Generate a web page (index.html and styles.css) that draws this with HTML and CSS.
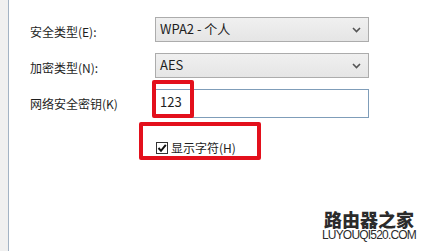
FILE: index.html
```
<!doctype html>
<html lang="zh-CN">
<head>
  <meta charset="utf-8">
  <title>无线网络属性</title>
  <meta name="viewport" content="width=device-width, initial-scale=1">
  <link rel="stylesheet" href="styles.css">
</head>
<body>
  <div class="window">
    <div class="strip"></div>
    <div class="panel">
      <div class="form">
        <div class="label">安全类型(E):</div>
        <div class="select">
          <span>WPA2 - 个人</span>
          <svg class="chev" width="9" height="6" viewBox="0 0 9 6">
            <path d="M1 1 L4.5 4.5 L8 1" fill="none" stroke="#555" stroke-width="1.6"/>
          </svg>
        </div>

        <div class="label">加密类型(N):</div>
        <div class="select">
          <span>AES</span>
          <svg class="chev" width="9" height="6" viewBox="0 0 9 6">
            <path d="M1 1 L4.5 4.5 L8 1" fill="none" stroke="#555" stroke-width="1.6"/>
          </svg>
        </div>

        <div class="label label-key">网络安全密钥(K)</div>
        <div class="input">123</div>

        <div></div>
        <label class="check">
          <span class="box">
            <svg width="10" height="10" viewBox="0 0 10 10">
              <path d="M1.5 5 L4 7.8 L8.8 1.8" fill="none" stroke="#111" stroke-width="2"/>
            </svg>
          </span>
          <span>显示字符(H)</span>
        </label>
      </div>

      <!-- annotation marks over the dialog -->
      <div class="mark mark-key"></div>
      <div class="mark mark-check"></div>

      <div class="logo">
        <div class="logo-cn">路由器之家</div>
        <div class="logo-en">LUYOUQI520.COM</div>
      </div>
    </div>
  </div>
</body>
</html>
```

FILE: styles.css
```
html,
body {
  margin: 0;
  padding: 0;
  background: #fff;
  font-family: "Noto Sans CJK SC", "Liberation Sans", sans-serif;
  font-size: 12px;
  color: #1e1e1e;
}

.window {
  display: flex;
  width: 424px;
  height: 251px;
  overflow: hidden;
}

.strip {
  width: 8px;
  background: #f0f0f0;
  border-right: 1px solid #a3b3c4;
}

.panel {
  position: relative;
  flex: 1;
}

.form {
  display: grid;
  grid-template-columns: 125px 214px;
  grid-template-rows: 25px 25px 29px 34px;
  row-gap: 11px;
  align-items: center;
  padding: 17px 0 0 21px;
}

.label {
  line-height: 16px;
  padding-top: 5px;
}

.label-key {
  padding-top: 0;
}

.select {
  height: 25px;
  box-sizing: border-box;
  border: 1px solid #acacac;
  background: linear-gradient(to bottom, #f0f0f0, #e5e5e5);
  display: flex;
  align-items: center;
  justify-content: space-between;
  padding: 0 7px 0 4px;
  font-size: 13px;
  line-height: 16px;
}

.select span {
  margin-top: -1px;
}

.input {
  height: 29px;
  box-sizing: border-box;
  border: 1px solid #7f9db9;
  background: #fff;
  display: flex;
  align-items: center;
  padding: 0 0 3px 4px;
  font-size: 13px;
  line-height: 16px;
}

.check {
  display: flex;
  align-items: center;
  gap: 3px;
  padding-left: 1px;
  padding-top: 3px;
  font-size: 12px;
  line-height: 16px;
}

.box {
  width: 12px;
  height: 12px;
  box-sizing: border-box;
  border: 1px solid #333;
  background: #fff;
  display: flex;
  align-items: center;
  justify-content: center;
}

.mark {
  position: absolute;
  border: 4px solid #e3101c;
  border-radius: 2px;
  box-sizing: border-box;
}

.mark-key {
  left: 143px;
  top: 80px;
  width: 42px;
  height: 38px;
}

.mark-check {
  left: 130px;
  top: 122px;
  width: 122px;
  height: 38px;
}

.logo {
  position: absolute;
  left: 312px;
  top: 211px;
  width: 96px;
  text-align: center;
  color: #2b2b2b;
}

.logo-cn {
  font-size: 18px;
  font-weight: 900;
  line-height: 17px;
}

.logo-en {
  margin-top: 1px;
  font-family: "Liberation Sans", sans-serif;
  font-size: 12px;
  line-height: 12px;
  letter-spacing: -0.8px;
}
```
